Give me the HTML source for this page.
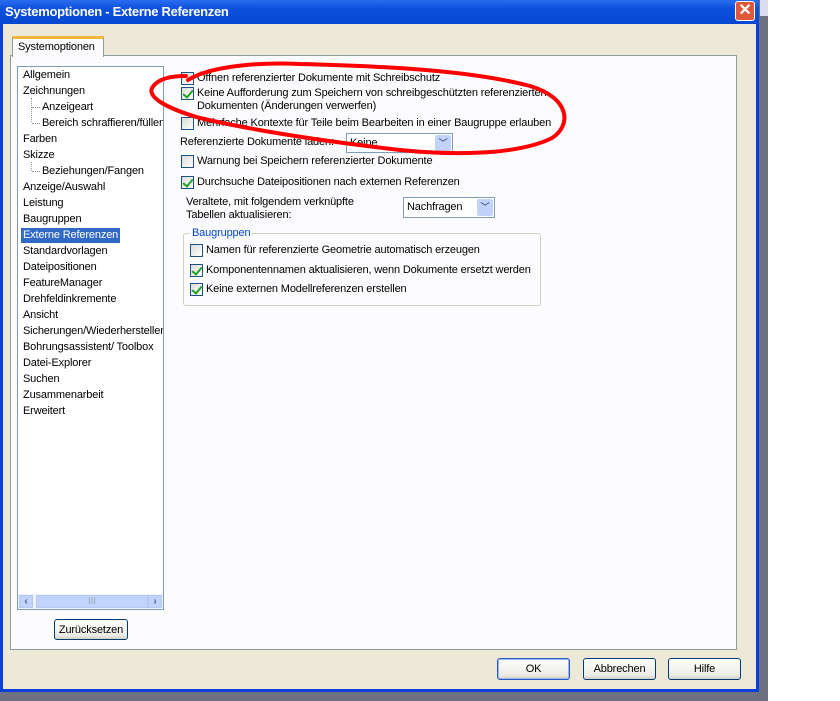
<!DOCTYPE html>
<html><head><style>
*{box-sizing:border-box;margin:0;padding:0}
body{width:840px;height:701px;background:#fff;position:relative;overflow:hidden;font-family:"Liberation Sans",Tahoma,sans-serif;font-size:11px;color:#000;letter-spacing:-0.15px}
.abs{position:absolute}
#strip{left:759px;top:0;width:9px;height:701px;background:#6d7283}
#bottom{left:0;top:692px;width:768px;height:9px;background:#6d7283}
#win{left:0;top:0;width:759px;height:692px;background:#0a3ed8}
#title{left:0;top:0;width:759px;height:24px;background:linear-gradient(#2a6cf0,#0a4fdc 40%,#0848d0);color:#fff;font-weight:bold;font-size:13px;padding:4px 0 0 5px;letter-spacing:-0.3px}
#close{left:735px;top:1px;width:20px;height:20px;background:#e0583a;border:1px solid #fff;border-radius:3px;color:#fff;font-size:16px;font-weight:bold;text-align:center;line-height:18px}
#body{left:3px;top:24px;width:753px;height:665px;background:#ece9d8}
#panel{left:10px;top:55px;width:727px;height:595px;background:#fcfcfe;border:1px solid #919b9c}
#tab{left:12px;top:36px;width:92px;height:21px;background:#fcfcfe;border:1px solid #919b9c;border-bottom:none;border-top:3px solid #f5b83c;padding:2px 0 0 5px}
#list{left:17px;top:66px;width:147px;height:544px;background:#fff;border:1px solid #7f9db9;overflow:hidden}
.li{position:absolute;left:5px;white-space:nowrap;top:0}
.sub{left:24px}
.sel{background:#316ac5;color:#fff;padding:0 2px;left:3px}
.dot{position:absolute;left:13px;width:1px;border-left:1px dotted #999}
.hd{position:absolute;left:14px;width:8px;border-top:1px dotted #999}
#sb{left:18px;top:594px;width:145px;height:15px;background:#eef3fd}
.sbb{position:absolute;top:1px;width:14px;height:13px;background:#c1d3fb;border:1px solid #b5c8f2;color:#4d6185;font-size:10px;text-align:center;line-height:11px;font-weight:bold}
.btn{position:absolute;background:linear-gradient(#fff,#ecebe6 80%,#d6d0c5);border:1px solid #003c74;border-radius:3px;text-align:center;line-height:20px}
.cb{position:absolute;width:13px;height:13px;border:1px solid #1c5180;background:linear-gradient(135deg,#dcdcd6,#fff);}
.cb.c::after{content:"";position:absolute;left:3px;top:0px;width:4px;height:8px;border:solid #21a121;border-width:0 2px 2px 0;transform:rotate(40deg)}
.t{position:absolute;white-space:nowrap}
.dd{position:absolute;background:#fff;border:1px solid #7f9db9;padding:3px 3px}
.dd b{position:absolute;right:1px;top:1px;width:16px;bottom:1px;background:#c1d3fb;border-radius:2px;color:#4d6185;font-size:9px;text-align:center;line-height:17px}
#grp{left:183px;top:233px;width:358px;height:73px;border:1px solid #d0d0bf;border-radius:3px}
</style></head><body>
<div class="abs" id="strip"></div><div class="abs" id="bottom"></div>
<div class="abs" style="left:760px;top:0;width:8px;height:16px;background:#dde"></div>
<div class="abs" id="win"></div>
<div class="abs" id="title">Systemoptionen - Externe Referenzen</div>
<div class="abs" id="close">✕</div>
<div class="abs" id="body"></div>
<div class="abs" id="panel"></div>
<div class="abs" id="tab">Systemoptionen</div>
<div class="abs" id="list">
<div class="li" style="top:2px">Allgemein</div>
<div class="li" style="top:18px">Zeichnungen</div>
<div class="dot" style="top:31px;height:24px"></div>
<div class="hd" style="top:40px"></div><div class="hd" style="top:56px"></div>
<div class="li sub" style="top:34px">Anzeigeart</div>
<div class="li sub" style="top:50px">Bereich schraffieren/füllen</div>
<div class="li" style="top:66px">Farben</div>
<div class="li" style="top:82px">Skizze</div>
<div class="dot" style="top:95px;height:9px"></div><div class="hd" style="top:104px"></div>
<div class="li sub" style="top:98px">Beziehungen/Fangen</div>
<div class="li" style="top:114px">Anzeige/Auswahl</div>
<div class="li" style="top:130px">Leistung</div>
<div class="li" style="top:146px">Baugruppen</div>
<div class="li sel" style="top:161px;height:15px;padding-top:1px">Externe Referenzen</div>
<div class="li" style="top:178px">Standardvorlagen</div>
<div class="li" style="top:194px">Dateipositionen</div>
<div class="li" style="top:210px">FeatureManager</div>
<div class="li" style="top:226px">Drehfeldinkremente</div>
<div class="li" style="top:242px">Ansicht</div>
<div class="li" style="top:258px">Sicherungen/Wiederherstellen</div>
<div class="li" style="top:274px">Bohrungsassistent/ Toolbox</div>
<div class="li" style="top:290px">Datei-Explorer</div>
<div class="li" style="top:306px">Suchen</div>
<div class="li" style="top:322px">Zusammenarbeit</div>
<div class="li" style="top:338px">Erweitert</div>
</div>
<div class="abs" id="sb"><div class="sbb" style="left:1px">‹</div><div class="sbb" style="left:18px;width:112px;color:#9ab;font-weight:normal">III</div><div class="sbb" style="left:130px">›</div></div>
<div class="btn" style="left:54px;top:619px;width:74px;height:21px">Zurücksetzen</div>

<div class="cb" style="left:181px;top:72px"></div><div class="t" style="left:197px;top:72px">Öffnen referenzierter Dokumente mit Schreibschutz</div>
<div class="cb c" style="left:181px;top:87px"></div><div class="t" style="left:197px;top:87px;line-height:13px">Keine Aufforderung zum Speichern von schreibgeschützten referenzierten<br>Dokumenten (Änderungen verwerfen)</div>
<div class="cb" style="left:181px;top:117px"></div><div class="t" style="left:197px;top:117px">Mehrfache Kontexte für Teile beim Bearbeiten in einer Baugruppe erlauben</div>
<div class="t" style="left:180px;top:136px">Referenzierte Dokumente laden:</div>
<div class="dd" style="left:346px;top:133px;width:107px;height:20px">Keine<b>﹀</b></div>
<div class="cb" style="left:181px;top:155px"></div><div class="t" style="left:197px;top:155px">Warnung bei Speichern referenzierter Dokumente</div>
<div class="cb c" style="left:181px;top:176px"></div><div class="t" style="left:197px;top:176px">Durchsuche Dateipositionen nach externen Referenzen</div>
<div class="t" style="left:186px;top:196px;line-height:13px">Veraltete, mit folgendem verknüpfte<br>Tabellen aktualisieren:</div>
<div class="dd" style="left:403px;top:197px;width:92px;height:21px">Nachfragen<b>﹀</b></div>
<div class="abs" id="grp"></div>
<div class="t" style="left:190px;top:227px;background:#fcfcfe;color:#0046d5;padding:0 2px">Baugruppen</div>
<div class="cb" style="left:190px;top:244px"></div><div class="t" style="left:206px;top:244px">Namen für referenzierte Geometrie automatisch erzeugen</div>
<div class="cb c" style="left:190px;top:264px"></div><div class="t" style="left:206px;top:264px">Komponentennamen aktualisieren, wenn Dokumente ersetzt werden</div>
<div class="cb c" style="left:190px;top:283px"></div><div class="t" style="left:206px;top:283px">Keine externen Modellreferenzen erstellen</div>

<div class="btn" style="left:497px;top:658px;width:73px;height:22px;border-color:#2a5bc8;box-shadow:inset 0 0 0 1px #98b8ea">OK</div>
<div class="btn" style="left:583px;top:658px;width:73px;height:22px">Abbrechen</div>
<div class="btn" style="left:668px;top:658px;width:73px;height:22px">Hilfe</div>

<svg class="abs" style="left:0;top:0" width="840" height="701"><path d="M188,80 C210,66 260,62 300,64 C380,66 470,70 530,86 C570,98 572,125 552,138 C520,154 460,156 400,150 C330,142 260,132 200,118 C165,108 148,97 152,88 C158,78 172,76 186,76" fill="none" stroke="#f00" stroke-width="4" stroke-linecap="round"/></svg>
</body></html>
